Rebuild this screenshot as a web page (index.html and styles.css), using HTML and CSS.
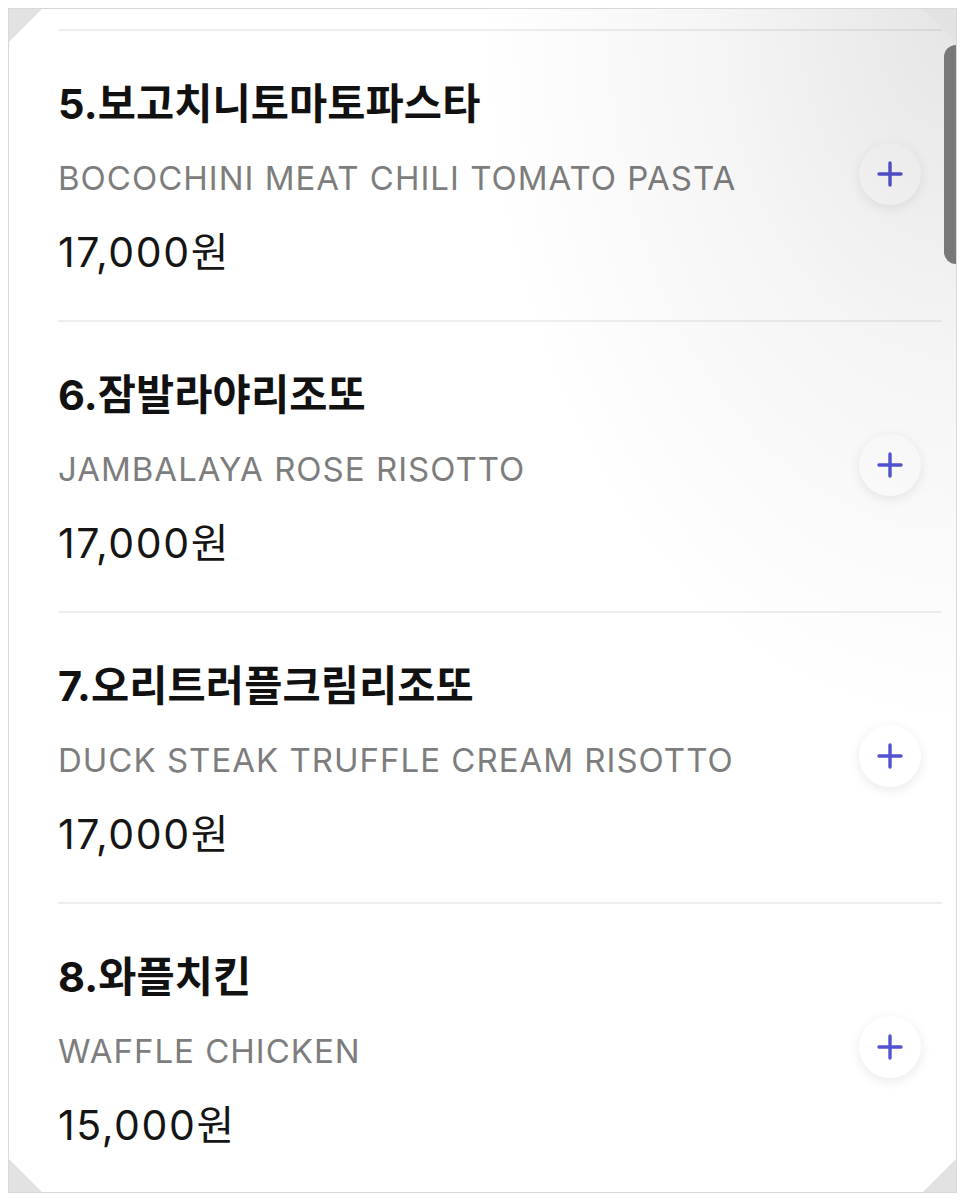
FILE: index.html
```
<!DOCTYPE html>
<html lang="ko">
<head>
<meta charset="utf-8">
<title>메뉴</title>
<link rel="stylesheet" href="styles.css">
</head>
<body>
<div class="frame">
  <div class="list">
    <div class="item">
      <div class="info">
        <div class="title">5.보고치니토마토파스타</div>
        <div class="sub">BOCOCHINI MEAT CHILI TOMATO PASTA</div>
        <div class="price">17,000원</div>
      </div>
      <button class="add" type="button" aria-label="추가">
        <svg viewBox="0 0 28 28" width="28" height="28"><path d="M14 3v22M3 14h22" stroke="currentColor" stroke-width="3.4" stroke-linecap="round" fill="none"/></svg>
      </button>
    </div>
    <div class="item">
      <div class="info">
        <div class="title">6.잠발라야리조또</div>
        <div class="sub">JAMBALAYA ROSE RISOTTO</div>
        <div class="price">17,000원</div>
      </div>
      <button class="add" type="button" aria-label="추가">
        <svg viewBox="0 0 28 28" width="28" height="28"><path d="M14 3v22M3 14h22" stroke="currentColor" stroke-width="3.4" stroke-linecap="round" fill="none"/></svg>
      </button>
    </div>
    <div class="item">
      <div class="info">
        <div class="title">7.오리트러플크림리조또</div>
        <div class="sub">DUCK STEAK TRUFFLE CREAM RISOTTO</div>
        <div class="price">17,000원</div>
      </div>
      <button class="add" type="button" aria-label="추가">
        <svg viewBox="0 0 28 28" width="28" height="28"><path d="M14 3v22M3 14h22" stroke="currentColor" stroke-width="3.4" stroke-linecap="round" fill="none"/></svg>
      </button>
    </div>
    <div class="item">
      <div class="info">
        <div class="title">8.와플치킨</div>
        <div class="sub">WAFFLE CHICKEN</div>
        <div class="price">15,000원</div>
      </div>
      <button class="add" type="button" aria-label="추가">
        <svg viewBox="0 0 28 28" width="28" height="28"><path d="M14 3v22M3 14h22" stroke="currentColor" stroke-width="3.4" stroke-linecap="round" fill="none"/></svg>
      </button>
    </div>
  </div>
  <div class="shade"></div>
  <div class="scrollbar"></div>
  <div class="corner tl"></div>
  <div class="corner tr"></div>
  <div class="corner bl"></div>
  <div class="corner br"></div>
</div>
</body>
</html>
```
FILE: styles.css
```
html, body {
  margin: 0;
  padding: 0;
  background: #ffffff;
}
body {
  font-family: Inter, "Noto Sans CJK KR", sans-serif;
}
.frame {
  position: relative;
  margin: 8px;
  width: 947px;
  height: 1183px;
  border: 1px solid #d9d9d9;
  overflow: hidden;
  background: #ffffff;
}
.list {
  padding: 20px 14px 0 49px;
}
.item {
  display: flex;
  align-items: center;
  border-top: 2px solid #eeeeee;
  padding: 36px 0 31px;
  height: 222px;
}
.info {
  flex: 1;
  min-width: 0;
}
.title {
  font-size: 41.5px;
  font-weight: 700;
  line-height: 74px;
  color: #111111;
  letter-spacing: 0.1px;
}
.sub {
  font-size: 33px;
  font-weight: 400;
  line-height: 74px;
  color: #7d7d7d;
  letter-spacing: 1px;
}
.price {
  font-size: 41px;
  font-weight: 400;
  line-height: 74px;
  color: #151515;
  letter-spacing: 1.6px;
}
.add {
  flex: none;
  width: 62px;
  height: 62px;
  margin: 0 21px 8px 0;
  padding: 0;
  border: none;
  border-radius: 50%;
  background: #ffffff;
  box-shadow: 0 3px 12px rgba(0, 0, 0, 0.09);
  color: #5353d2;
  display: flex;
  align-items: center;
  justify-content: center;
}
.add svg {
  display: block;
}
.shade {
  position: absolute;
  inset: 0;
  pointer-events: none;
  background: radial-gradient(ellipse 480px 720px at 100% 0%, rgba(0, 0, 0, 0.1) 0%, rgba(0, 0, 0, 0.04) 50%, rgba(0, 0, 0, 0) 100%);
}
.scrollbar {
  position: absolute;
  right: 0;
  top: 36px;
  width: 12px;
  height: 219px;
  background: #787878;
  border-radius: 12px 0 0 12px;
}
.corner {
  position: absolute;
  width: 33px;
  height: 33px;
  background: #e2e2e2;
}
.tl { top: 0; left: 0; clip-path: polygon(0 0, 100% 0, 0 100%); }
.tr { top: 0; right: 0; clip-path: polygon(0 0, 100% 0, 100% 100%); }
.bl { bottom: 0; left: 0; clip-path: polygon(0 0, 100% 100%, 0 100%); }
.br { bottom: 0; right: 0; clip-path: polygon(100% 0, 100% 100%, 0 100%); }
```
